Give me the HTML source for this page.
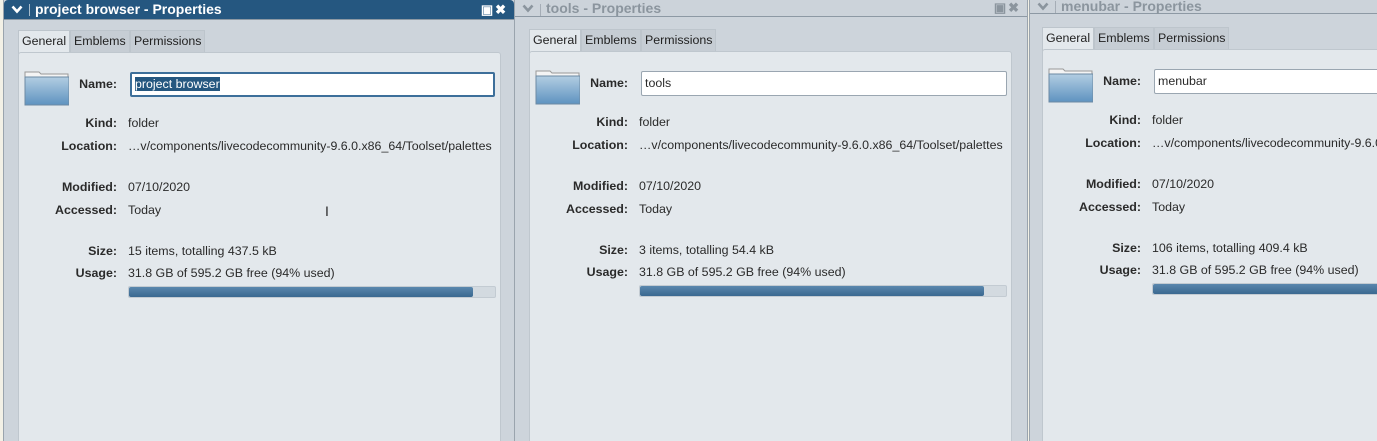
<!DOCTYPE html>
<html style="overflow:hidden;height:441px"><head><meta charset="utf-8"><style>
body{margin:0;width:1377px;height:441px;overflow:hidden;background:#f3f1e6;font-family:"Liberation Sans",sans-serif;font-size:12.4px;color:#2a2a2a;position:relative}
.win{position:absolute;top:0;height:441px;background:#cdd4db;border-left:1px solid #9aa4ad;border-right:1px solid #9aa4ad;overflow:hidden}
.tb{position:absolute;left:0;right:0;top:0;height:19px;border-bottom:1px solid #8d99a4;font-weight:bold;font-size:14px;line-height:19px;border-radius:4px 4px 0 0}
.act .tb{background:#255780;color:#fff}
.ina .tb{background:#ccd3da;color:#8b959e}
.tb .t{position:absolute;left:31px}
.tb svg.ch{position:absolute;left:7px;top:5px}
.tb .sep{position:absolute;left:25px;top:4px;width:1px;height:12px;background:currentColor;opacity:.6}
.tb .btns{position:absolute;right:6px;top:0;font-size:13px;letter-spacing:2px}
.tab{position:absolute;height:21px;line-height:21px;padding:0 3px;background:#c6cdd4;border:1px solid #bdc5cc;border-bottom:none;color:#222}
.tab.on{background:#e3e8ec;height:23px}
.panel{position:absolute;background:#e3e8ec;border:1px solid #bfc7ce;border-radius:3px;height:395px}
.lbl{position:absolute;font-weight:bold;text-align:right;width:100px}
.val{position:absolute;white-space:nowrap}
.inp{position:absolute;height:23px;background:#fff;border:1px solid #9aa6b1;border-radius:2px;line-height:23px;padding-left:3px}
.bar{position:absolute;height:10px;background:#d3dae0;border:1px solid #c3cbd2;border-radius:2px}
.bar i{display:block;height:10px;background:linear-gradient(#5a87ad,#3a6890);border-radius:2px}
.fold{position:absolute;width:45px;height:38px}
.clip{position:absolute;top:0;height:441px;overflow:hidden}
</style></head><body>

<div class="win act" style="left:3px;width:510px">
 <div class="tb"><svg class="ch" width="12" height="9" viewBox="0 0 12 9"><path d="M1.5 1.5L6 6.5L10.5 1.5" fill="none" stroke="currentColor" stroke-width="2.6"/></svg><span class="sep"></span><span class="t">project browser - Properties</span><span class="btns">&#9635;&#10006;</span></div>
</div>
<div class="win ina" style="left:514px;width:512px">
 <div class="tb" style="height:16px;line-height:16px"><svg class="ch" style="top:4px" width="12" height="9" viewBox="0 0 12 9"><path d="M1.5 1.5L6 6.5L10.5 1.5" fill="none" stroke="currentColor" stroke-width="2.6"/></svg><span class="sep"></span><span class="t">tools - Properties</span><span class="btns">&#9635;&#10006;</span></div>
</div>
<div class="win ina" style="left:1029px;width:360px">
 <div class="tb" style="height:13px;line-height:13px"><svg class="ch" style="top:2px" width="12" height="9" viewBox="0 0 12 9"><path d="M1.5 1.5L6 6.5L10.5 1.5" fill="none" stroke="currentColor" stroke-width="2.6"/></svg><span class="sep" style="top:1px"></span><span class="t">menubar - Properties</span></div>
</div>

<svg width="0" height="0" style="position:absolute"><defs><linearGradient id="fg" x1="0" y1="0" x2="0" y2="1"><stop offset="0" stop-color="#b2cde2"/><stop offset="1" stop-color="#5e93c0"/></linearGradient></defs></svg>

<div class="clip" style="left:0;width:513px">
 <div class="tab on" style="left:18px;top:30px">General</div>
 <div class="tab" style="left:70px;top:30px">Emblems</div>
 <div class="tab" style="left:130px;top:30px">Permissions</div>
 <div class="panel" style="left:18px;top:52px;width:481px"></div>
 <svg class="fold" style="left:24px;top:68px" viewBox="0 0 45 38"><path d="M1 4h14l2 2h27v4H1z" fill="#f4f4f4" stroke="#999"/><rect x="1" y="9" width="44" height="28" fill="url(#fg)" stroke="#6d8aa3"/></svg>
 <div class="lbl" style="left:17px;top:77px">Name:</div>
 <div class="inp" style="left:130px;top:72px;width:358px;border:2px solid #3d6f9a;height:21px;line-height:21px"><span style="background:#255780;color:#fff">project browser</span></div>
 <div class="lbl" style="left:17px;top:116px">Kind:</div><div class="val" style="left:128px;top:116px">folder</div>
 <div class="lbl" style="left:17px;top:139px">Location:</div><div class="val" style="left:128px;top:139px">…v/components/livecodecommunity-9.6.0.x86_64/Toolset/palettes</div>
 <div class="lbl" style="left:17px;top:180px">Modified:</div><div class="val" style="left:128px;top:180px">07/10/2020</div>
 <div class="lbl" style="left:17px;top:203px">Accessed:</div><div class="val" style="left:128px;top:203px">Today</div>
 <div class="lbl" style="left:17px;top:244px">Size:</div><div class="val" style="left:128px;top:244px">15 items, totalling 437.5 kB</div>
 <div class="lbl" style="left:17px;top:266px">Usage:</div><div class="val" style="left:128px;top:266px">31.8 GB of 595.2 GB free (94% used)</div>
 <div class="bar" style="left:128px;top:286px;width:366px"><i style="width:344px"></i></div>
 <div class="val" style="left:325px;top:203px;font-size:14px">I</div>
</div>

<div class="clip" style="left:514px;width:513px">
<div style="position:absolute;left:-3px;top:-1px">
 <div class="tab on" style="left:18px;top:30px">General</div>
 <div class="tab" style="left:70px;top:30px">Emblems</div>
 <div class="tab" style="left:130px;top:30px">Permissions</div>
 <div class="panel" style="left:18px;top:52px;width:481px"></div>
 <svg class="fold" style="left:24px;top:68px" viewBox="0 0 45 38"><path d="M1 4h14l2 2h27v4H1z" fill="#f4f4f4" stroke="#999"/><rect x="1" y="9" width="44" height="28" fill="url(#fg)" stroke="#6d8aa3"/></svg>
 <div class="lbl" style="left:17px;top:77px">Name:</div>
 <div class="inp" style="left:130px;top:72px;width:361px">tools</div>
 <div class="lbl" style="left:17px;top:116px">Kind:</div><div class="val" style="left:128px;top:116px">folder</div>
 <div class="lbl" style="left:17px;top:139px">Location:</div><div class="val" style="left:128px;top:139px">…v/components/livecodecommunity-9.6.0.x86_64/Toolset/palettes</div>
 <div class="lbl" style="left:17px;top:180px">Modified:</div><div class="val" style="left:128px;top:180px">07/10/2020</div>
 <div class="lbl" style="left:17px;top:203px">Accessed:</div><div class="val" style="left:128px;top:203px">Today</div>
 <div class="lbl" style="left:17px;top:244px">Size:</div><div class="val" style="left:128px;top:244px">3 items, totalling 54.4 kB</div>
 <div class="lbl" style="left:17px;top:266px">Usage:</div><div class="val" style="left:128px;top:266px">31.8 GB of 595.2 GB free (94% used)</div>
 <div class="bar" style="left:128px;top:286px;width:366px"><i style="width:344px"></i></div>
</div></div>

<div class="clip" style="left:1029px;width:348px">
<div style="position:absolute;left:-5px;top:-3px">
 <div class="tab on" style="left:18px;top:30px">General</div>
 <div class="tab" style="left:70px;top:30px">Emblems</div>
 <div class="tab" style="left:130px;top:30px">Permissions</div>
 <div class="panel" style="left:18px;top:52px;width:481px"></div>
 <svg class="fold" style="left:24px;top:68px" viewBox="0 0 45 38"><path d="M1 4h14l2 2h27v4H1z" fill="#f4f4f4" stroke="#999"/><rect x="1" y="9" width="44" height="28" fill="url(#fg)" stroke="#6d8aa3"/></svg>
 <div class="lbl" style="left:17px;top:77px">Name:</div>
 <div class="inp" style="left:130px;top:72px;width:361px">menubar</div>
 <div class="lbl" style="left:17px;top:116px">Kind:</div><div class="val" style="left:128px;top:116px">folder</div>
 <div class="lbl" style="left:17px;top:139px">Location:</div><div class="val" style="left:128px;top:139px">…v/components/livecodecommunity-9.6.0.x86_64/Toolset/palettes</div>
 <div class="lbl" style="left:17px;top:180px">Modified:</div><div class="val" style="left:128px;top:180px">07/10/2020</div>
 <div class="lbl" style="left:17px;top:203px">Accessed:</div><div class="val" style="left:128px;top:203px">Today</div>
 <div class="lbl" style="left:17px;top:244px">Size:</div><div class="val" style="left:128px;top:244px">106 items, totalling 409.4 kB</div>
 <div class="lbl" style="left:17px;top:266px">Usage:</div><div class="val" style="left:128px;top:266px">31.8 GB of 595.2 GB free (94% used)</div>
 <div class="bar" style="left:128px;top:286px;width:366px"><i style="width:344px"></i></div>
</div></div>

</body></html>
